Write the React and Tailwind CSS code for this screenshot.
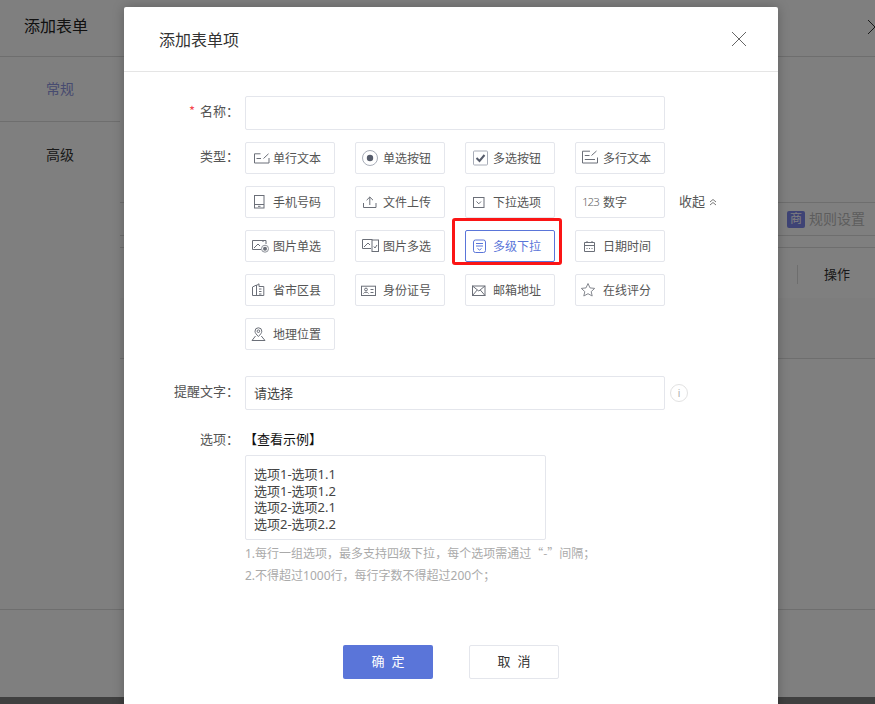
import React from "react";

const sans = { fontFamily: '"Noto Sans", "Noto Sans CJK SC", sans-serif' };

// full-width punctuation
const COLON = "\uFF1A";
const COMMA = "\uFF0C";
const SEMI = "\uFF1B";

const Ico = ({ color = "#6b6f78", children }) => (
  <svg
    width="18"
    height="18"
    viewBox="0 0 18 18"
    fill="none"
    stroke={color}
    strokeWidth="1"
    className="shrink-0 overflow-visible"
  >
    {children}
  </svg>
);

const icons = {
  text: (
    <Ico>
      <path d="M7.5 4.8H1.5V14H16V9M3.5 9.5H8M10.5 9.5L15.5 4.8" />
    </Ico>
  ),
  radio: (
    <Ico color="#a8adb8">
      <circle cx="7" cy="9" r="7.5" />
      <circle cx="7" cy="9" r="3.2" fill="#565c6b" stroke="none" />
    </Ico>
  ),
  check: (
    <Ico color="#a8adb8">
      <rect x="0.5" y="2" width="14" height="14" rx="1" />
      <path d="M3.5 9L6.5 12L11.5 6" stroke="#565c6b" strokeWidth="2" />
    </Ico>
  ),
  textarea: (
    <Ico>
      <path d="M7 2.2H-0.5V14H14.5V8.5M1.8 6.5H6.5M1.8 10.5H12M8.5 6.5L13.5 2" />
    </Ico>
  ),
  phone: (
    <Ico>
      <rect x="1.5" y="2.5" width="9.5" height="12.5" />
      <path d="M1.5 11.5H11M5 13.3H7.5" />
    </Ico>
  ),
  upload: (
    <Ico>
      <path d="M0.5 10V14.5H13V10M6.8 12V4M3.6 7.2L6.8 4L10 7.2" />
    </Ico>
  ),
  select: (
    <Ico>
      <rect x="0.5" y="4.5" width="10.5" height="10" />
      <path d="M3.5 8.5L5.8 10.8L8 8.5" />
    </Ico>
  ),
  imgRadio: (
    <Ico>
      <path d="M8 12.5H-0.5V3.5H13V7M1 11L5 7L7 9M10 3.5V5" />
      <circle cx="12" cy="11.7" r="3.5" stroke="#8d9199" />
      <circle cx="12" cy="11.7" r="2" fill="#6b6f78" stroke="none" />
    </Ico>
  ),
  imgCheck: (
    <Ico>
      <path d="M8 11.5H-0.5V2.5H9.5M1 10L5 6L7 8" />
      <rect x="9" y="3" width="6.5" height="11.5" />
      <path d="M10.8 9.5L12 11L14 8" />
    </Ico>
  ),
  cascade: (
    <Ico color="#5a75d9">
      <rect x="0.5" y="3" width="12" height="12.5" rx="2" />
      <path d="M3 6.5H10M3 9H10M4.5 11.5L6.5 13L8.5 11.5" />
    </Ico>
  ),
  date: (
    <Ico>
      <path d="M1.5 5.5H11.5V14.5H1.5ZM1.5 8.5H11.5M4 4V6M9 4V6" />
      <path d="M3.5 11.5H9.5" strokeDasharray="1 1.5" />
    </Ico>
  ),
  city: (
    <Ico>
      <path d="M-0.5 14.5V6L3.5 4V14.5M3.5 4.5L6 2.8V5.5H10.8V14.5H-0.5M6 8H8.5M6 10.5H8.5M6 13H8.5" />
    </Ico>
  ),
  idcard: (
    <Ico>
      <rect x="-1.5" y="5.2" width="14" height="9.3" />
      <circle cx="3" cy="8.5" r="1.4" />
      <path d="M0.5 12.5C1 10.8 5 10.8 5.5 12.5M7.5 8.5H10.5M7.5 11.5H10.5" />
    </Ico>
  ),
  mail: (
    <Ico>
      <rect x="-0.5" y="5" width="12.5" height="9.5" />
      <path d="M-0.5 5L5.8 10L12 5M-0.5 14.5L4.2 9M12 14.5L7.3 9" />
    </Ico>
  ),
  star: (
    <Ico color="#85888f">
      <path d="M5 2.5L7 6.9L11.7 7.4L8.2 10.6L9.2 15L5 12.7L0.8 15L1.8 10.6L-1.7 7.4L3 6.9Z" />
    </Ico>
  ),
  pin: (
    <Ico>
      <path d="M5.4 11.5C3.5 9.5 2 8 2 6.2A3.4 3.4 0 0 1 8.8 6.2C8.8 8 7.3 9.5 5.4 11.5Z" />
      <circle cx="5.4" cy="6.2" r="1.3" />
      <path d="M2.5 11L-1 15.5H12L8.3 11" />
    </Ico>
  ),
};

const rows = [
  [
    ["单行文本", "text"],
    ["单选按钮", "radio"],
    ["多选按钮", "check"],
    ["多行文本", "textarea"],
  ],
  [
    ["手机号码", "phone"],
    ["文件上传", "upload"],
    ["下拉选项", "select"],
    ["数字", "number"],
  ],
  [
    ["图片单选", "imgRadio"],
    ["图片多选", "imgCheck"],
    ["多级下拉", "cascade", true],
    ["日期时间", "date"],
  ],
  [
    ["省市区县", "city"],
    ["身份证号", "idcard"],
    ["邮箱地址", "mail"],
    ["在线评分", "star"],
  ],
  [["地理位置", "pin"]],
];

const TypeButton = ({ label, icon, active }) => (
  <div
    className={`relative flex items-center gap-[2px] w-[90px] h-8 pl-[7px] border rounded-[2px] text-xs ${
      active ? "border-[#5a75d9] text-[#5a75d9]" : "border-[#e4e6ec] text-[#555]"
    }`}
  >
    {icon === "number" ? (
      <span className="w-[19px] -ml-[1px] text-[11.5px] text-[#666] font-light tracking-[-1px]">123</span>
    ) : (
      icons[icon]
    )}
    <span className="pt-[2px]">{label}</span>
    {active && (
      <span className="absolute -left-[14px] -top-[13px] -right-[8px] -bottom-[4px] border-[3px] border-[#fb1515] rounded-[3px]" />
    )}
  </div>
);

const Label = ({ children, className = "" }) => (
  <div className={`w-[115px] mr-[6px] shrink-0 text-right text-[13px] text-[#555] font-['Noto_Sans_CJK_SC'] ${className}`}>
    {children}
    {COLON}
  </div>
);

const Cjk = ({ children }) => <span className="font-['Noto_Sans_CJK_SC']">{children}</span>;

const App = () => {
  return (
    <div className="relative w-[875px] h-[704px] overflow-hidden bg-white" style={sans}>
      {/* page behind the dialog */}
      <div className="flex flex-col h-[704px]">
        <div className="flex items-center justify-between h-[57px] shrink-0 pl-6 border-b border-[#ddd] pb-[5px]">
          <span className="text-base text-[#222]">添加表单</span>
          <svg width="16" height="16" viewBox="0 0 16 16" stroke="#333" className="-mr-[8px] mt-[2px]">
            <path d="M1 1L15 15M15 1L1 15" />
          </svg>
        </div>
        <div className="flex flex-1 min-h-0 border-b border-[#ddd]">
          <div className="w-[120px] shrink-0 text-sm text-center">
            <div className="h-[65px] flex items-center justify-center border-b border-[#ddd] text-[#8f96e0]">常规</div>
            <div className="h-[65px] flex items-center justify-center text-[#333]">高级</div>
          </div>
          <div className="flex-1 pt-[145px]">
            <div className="h-[34px] border-y border-[#ddd] flex items-center justify-end pr-[10px] text-sm text-[#bbb]">
              <span className="w-[18px] h-[17px] mr-1 rounded-[2px] bg-[#7c86ea] text-white text-xs flex items-center justify-center">
                商
              </span>
              规则设置
            </div>
            <div className="mt-[11px] h-[51px] border-t border-[#ddd] flex items-center justify-end pr-[25px] pt-[3px] text-[13px] text-[#333]">
              <span className="w-px h-[19px] bg-[#ddd] mr-[26px]" />
              操作
            </div>
            <div className="h-[61px] bg-[#fbfbfb] border-b border-[#ddd]" />
          </div>
        </div>
        <div className="h-[87px] shrink-0" />
        <div className="h-[7px] shrink-0 bg-[#808080]" />
      </div>

      {/* mask */}
      <div className="absolute inset-0 bg-black/50" />

      {/* dialog */}
      <div className="absolute left-[124px] top-[7px] w-[654px] h-[720px] bg-white rounded-[2px] shadow-[0_0_12px_rgba(0,0,0,0.25)]">
        <div className="flex items-center justify-between h-[65px] pl-[35px] pr-[31px] border-b border-[#e5e5e5]">
          <span className="text-base text-[#333] pt-[2px]">添加表单项</span>
          <svg width="16" height="16" viewBox="0 0 16 16" stroke="#666">
            <path d="M1 1L15 15M15 1L1 15" />
          </svg>
        </div>

        <div className="pt-6">
          <div className="flex">
            <Label className="leading-[30px]">
              <span className="text-[#f5484d] mr-[5px]">*</span>名称
            </Label>
            <div className="w-[420px] h-[34px] border border-[#e4e6ec] rounded-[2px]" />
          </div>

          <div className="flex mt-3">
            <Label className="leading-[28px]">类型</Label>
            <div className="flex flex-col gap-3">
              {rows.map((row, i) => (
                <div key={i} className="flex items-center gap-5">
                  {row.map(([label, icon, active]) => (
                    <TypeButton key={label} label={label} icon={icon} active={active} />
                  ))}
                  {i === 1 && (
                    <div className="flex items-center -ml-[6px] text-[13px] text-[#555]">
                      收起
                      <svg width="8" height="8" viewBox="0 0 8 8" fill="none" stroke="#777" className="ml-[4px]">
                        <path d="M1 4L4 1.5L7 4M1 7L4 4.5L7 7" />
                      </svg>
                    </div>
                  )}
                </div>
              ))}
            </div>
          </div>

          <div className="flex mt-[26px]">
            <Label className="leading-[30px]">提醒文字</Label>
            <div className="flex items-center w-[420px] h-[34px] px-2 pt-[2px] border border-[#e4e6ec] rounded-[2px] text-[13px] text-[#444]">
              请选择
            </div>
            <div className="ml-[5px] mt-2 w-[18px] h-[18px] rounded-full border border-[#e2e2e2] flex items-center justify-center text-[10px] leading-none text-[#aaa]">
              i
            </div>
          </div>

          <div className="flex mt-[19px]">
            <Label className="leading-[20px]">选项</Label>
            <div>
              <div className="text-[13px] leading-[20px] text-[#111] font-['Noto_Sans_CJK_SC'] -ml-[1px]">【查看示例】</div>
              <div className="mt-[6px] w-[301px] h-[85px] px-2 py-[10px] border border-[#e4e6ec] rounded-[2px] text-[13px] leading-[16.7px] text-[#444]">
                <div>选项1-选项1.1</div>
                <div>选项1-选项1.2</div>
                <div>选项2-选项2.1</div>
                <div>选项2-选项2.2</div>
              </div>
              <div className="mt-[2px] mb-[1px] text-xs leading-[21px] text-[#aaa] whitespace-nowrap">
                <div>
                  1.每行一组选项<Cjk>{COMMA}</Cjk>最多支持四级下拉<Cjk>{COMMA}</Cjk>每个选项需通过
                  <Cjk>“-”</Cjk>间隔<Cjk>{SEMI}</Cjk>
                </div>
                <div>
                  2.不得超过1000行<Cjk>{COMMA}</Cjk>每行字数不得超过200个<Cjk>{SEMI}</Cjk>
                </div>
              </div>
            </div>
          </div>

          <div className="flex gap-9 mt-[58px] pl-[219px]">
            <button className="w-[90px] h-[34px] pl-[7px] bg-[#5a75d9] rounded-[2px] text-[13px] text-white tracking-[7px]">
              确定
            </button>
            <button className="w-[90px] h-[34px] pl-[7px] border border-[#e4e6ec] rounded-[2px] text-[13px] text-[#333] tracking-[7px]">
              取消
            </button>
          </div>
        </div>
      </div>
    </div>
  );
};

export default App;
